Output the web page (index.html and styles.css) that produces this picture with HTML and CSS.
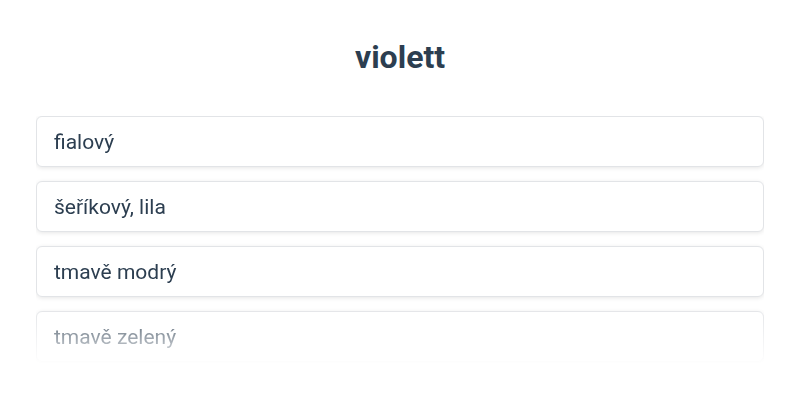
FILE: index.html
```html
<!DOCTYPE html>
<html lang="cs">
<head>
    <meta charset="UTF-8">
    <meta name="viewport" content="width=device-width, initial-scale=1.0">
    <title>violett</title>
    <link rel="stylesheet" href="styles.css">
</head>
<body>
    <div class="quiz">
        <h1 class="word">violett</h1>

        <div class="options">
            <div class="option">fialový</div>
            <div class="option">šeříkový, lila</div>
            <div class="option">tmavě modrý</div>
            <div class="option">tmavě zelený</div>
        </div>
    </div>
</body>
</html>
```

FILE: styles.css
```css
body {
    font-family: Roboto, 'Noto Sans', sans-serif;
    margin: 0;
    background: white;
    color: #2c3e50;
}
.quiz {
    padding: 37px 36px 0;
}
.word {
    margin: 0 0 39px;
    text-align: center;
    font-size: 32px;
    font-weight: 700;
    line-height: 40px;
    color: #2c3e50;
}
.options {
    display: flex;
    flex-direction: column;
    gap: 14px;
    height: 250px;
    overflow: hidden;
    -webkit-mask-image: linear-gradient(to bottom, #000 190px, transparent 250px);
    mask-image: linear-gradient(to bottom, #000 190px, transparent 250px);
}
.option {
    flex: none;
    box-sizing: border-box;
    height: 51px;
    display: flex;
    align-items: center;
    padding: 0 17px;
    border: 1px solid #e2e4e7;
    border-radius: 6px;
    box-shadow: 0 1px 4px rgba(0, 0, 0, 0.1);
    font-size: 21px;
    background: white;
}
```
